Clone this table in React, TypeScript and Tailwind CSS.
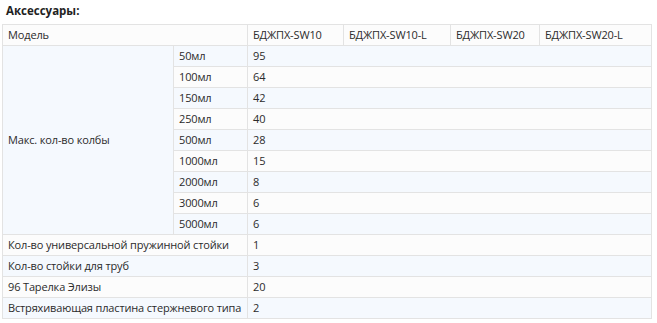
export default function App() {
  const volumes: [string, string][] = [
    ["50мл", "95"],
    ["100мл", "64"],
    ["150мл", "42"],
    ["250мл", "40"],
    ["500мл", "28"],
    ["1000мл", "15"],
    ["2000мл", "8"],
    ["3000мл", "6"],
    ["5000мл", "6"],
  ];
  const extras: [string, string][] = [
    ["Кол-во универсальной пружинной стойки", "1"],
    ["Кол-во стойки для труб", "3"],
    ["96 Тарелка Элизы", "20"],
    ["Встряхивающая пластина стержневого типа", "2"],
  ];
  const cell = "border border-[#e3e3e3] h-[21px] px-[5px] py-0 text-left align-middle font-normal whitespace-nowrap overflow-hidden";
  // rows alternate: header light, then blue / light
  const rowBg = (i: number) => (i % 2 === 0 ? "bg-[#f5f9fe]" : "bg-[#fcfcfc]");

  return (
    <div className="bg-white w-[657px] h-[323px] pl-[2px] pt-[4px] text-[11px] leading-[14px] tracking-[-0.15px] text-[#2b2b2b]" style={{ fontFamily: '"Open Sans", "Noto Sans", sans-serif' }}>
      <div className="pl-[4px] h-[20px] text-[11.5px] font-bold text-[#222] tracking-normal">Аксессуары:</div>
      <table className="table-fixed border-collapse w-[649px]">
        <colgroup>
          <col className="w-[171px]" />
          <col className="w-[74px]" />
          <col className="w-[96px]" />
          <col className="w-[107px]" />
          <col className="w-[89px]" />
          <col className="w-[112px]" />
        </colgroup>
        <tbody>
          <tr className="bg-[#fcfcfc]">
            <td className={cell} colSpan={2}>Модель</td>
            <td className={cell}>БДЖПХ-SW10</td>
            <td className={cell}>БДЖПХ-SW10-L</td>
            <td className={cell}>БДЖПХ-SW20</td>
            <td className={cell}>БДЖПХ-SW20-L</td>
          </tr>
          {volumes.map(([v, n], i) => (
            <tr key={v} className={rowBg(i)}>
              {i === 0 && (
                <td className={`${cell} bg-[#f5f9fe]`} rowSpan={volumes.length}>
                  Макс. кол-во колбы
                </td>
              )}
              <td className={cell}>{v}</td>
              <td className={cell} colSpan={4}>{n}</td>
            </tr>
          ))}
          {extras.map(([label, n], i) => (
            <tr key={label} className={rowBg(i + 1)}>
              <td className={cell} colSpan={2}>{label}</td>
              <td className={cell} colSpan={4}>{n}</td>
            </tr>
          ))}
        </tbody>
      </table>
    </div>
  );
}
